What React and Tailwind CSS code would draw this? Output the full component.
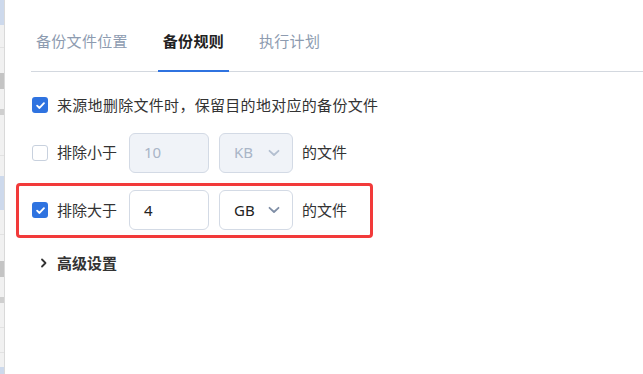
import React from "react";

function Check({ checked }) {
  return checked ? (
    <span className="flex h-4 w-4 shrink-0 items-center justify-center rounded-[3px] bg-[#2f73e0]">
      <svg width="11" height="11" viewBox="0 0 12 12" fill="none">
        <path d="M2.3 6.2 L4.9 8.7 L9.8 3.4" stroke="#fff" strokeWidth="2" strokeLinecap="round" strokeLinejoin="round" />
      </svg>
    </span>
  ) : (
    <span className="block h-4 w-4 shrink-0 rounded-[3px] border border-[#c8d1de] bg-white" />
  );
}

function Chevron({ color }) {
  return (
    <svg width="12" height="8" viewBox="0 0 12 8" fill="none">
      <path d="M1.5 1.8 L6 6 L10.5 1.8" stroke={color} strokeWidth="1.8" strokeLinecap="round" strokeLinejoin="round" />
    </svg>
  );
}

function SizeRow({ checked, label, value, unit, disabled }) {
  const box = disabled
    ? "bg-[#f0f3f8] border-[#d3dae5] text-[#a9b5c7]"
    : "bg-white border-[#d3dae5] text-[#222]";
  return (
    <div className="flex items-center">
      <Check checked={checked} />
      <span className="ml-[9px] text-[15px] text-[#333]">{label}</span>
      <div className={`ml-[12px] flex h-[40px] w-[80px] items-center rounded-[6px] border pl-[14px] text-[15px] ${box}`}>
        {value}
      </div>
      <div className={`ml-[10px] flex h-[40px] w-[74px] items-center justify-between rounded-[6px] border pl-[14px] pr-[12px] text-[15px] ${box}`}>
        <span>{unit}</span>
        <Chevron color={disabled ? "#b3bfd0" : "#7f8ea6"} />
      </div>
      <span className="ml-[9px] text-[15px] text-[#333]">的文件</span>
    </div>
  );
}

function LeftStrip() {
  return (
    <div className="flex h-full w-[4px] shrink-0 flex-col bg-[#f1f1f1]">
      <div className="h-[25px] bg-[#cdd9ec]" />
      <div className="h-[22px]" />
      <div className="h-px bg-[#e2e2e2]" />
      <div className="h-[25px]" />
      <div className="h-[16px] bg-[#c4c4c4]" />
      <div className="h-[20px]" />
      <div className="h-[6px] bg-[#cfcfcf]" />
      <div className="h-[40px]" />
      <div className="h-px bg-[#e2e2e2]" />
      <div className="h-[20px]" />
      <div className="h-[34px] bg-[#cdd9ec]" />
      <div className="h-[24px]" />
      <div className="h-px bg-[#e2e2e2]" />
      <div className="h-[26px]" />
      <div className="h-[16px] bg-[#c4c4c4]" />
      <div className="h-[20px]" />
      <div className="h-[6px] bg-[#cfcfcf]" />
      <div className="h-[24px]" />
      <div className="h-px bg-[#e2e2e2]" />
      <div className="h-[24px]" />
      <div className="h-px bg-[#e2e2e2]" />
      <div className="h-[14px]" />
      <div className="flex-1 bg-[#cdd9ec]" />
    </div>
  );
}

export default function App() {
  return (
    <div
      className="flex h-[374px] w-[643px] overflow-hidden bg-white"
      style={{ fontFamily: '"Noto Sans", "Noto Sans CJK SC", sans-serif' }}
    >
      <LeftStrip />
      <div className="w-px shrink-0 bg-[#d9d9d9]" />
      <div className="flex min-w-0 flex-1 flex-col pl-[26px]">
        <div className="mt-[29px] flex border-b border-[#d3d8df]">
          <div className="px-[5px] pb-[18px] text-[15px] leading-[24px] tracking-[0.3px] text-[#8d9bb0]">备份文件位置</div>
          <div className="relative ml-[25px] px-[5px] pb-[18px] text-[15px] font-bold leading-[24px] tracking-[0.3px] text-[#222]">
            备份规则
            <span className="absolute -bottom-px left-0 right-0 h-[2px] bg-[#2f73e0]" />
          </div>
          <div className="ml-[25px] px-[5px] pb-[18px] text-[15px] leading-[24px] tracking-[0.3px] text-[#8d9bb0]">执行计划</div>
        </div>

        <div className="mt-[22px] flex items-center pl-[1px]">
          <Check checked />
          <span className="ml-[9px] text-[15px] tracking-[0.3px] text-[#333]">来源地删除文件时，保留目的地对应的备份文件</span>
        </div>

        <div className="mt-[16px] pl-[1px]">
          <SizeRow label="排除小于" value="10" unit="KB" disabled />
        </div>

        <div className="mt-[10px] -ml-[15px] flex h-[55px] w-[357px] items-center rounded-[4px] border-[3px] border-[#f23a3a] pl-[13px]">
          <SizeRow checked label="排除大于" value="4" unit="GB" />
        </div>

        <div className="mt-[14px] flex items-center pl-[9px]">
          <svg width="8" height="10" viewBox="0 0 8 10" fill="none">
            <path d="M2 1.5 L5.5 5 L2 8.5" stroke="#333" strokeWidth="1.8" strokeLinecap="round" strokeLinejoin="round" />
          </svg>
          <span className="ml-[9px] text-[15px] font-bold text-[#333]">高级设置</span>
        </div>
      </div>
    </div>
  );
}
